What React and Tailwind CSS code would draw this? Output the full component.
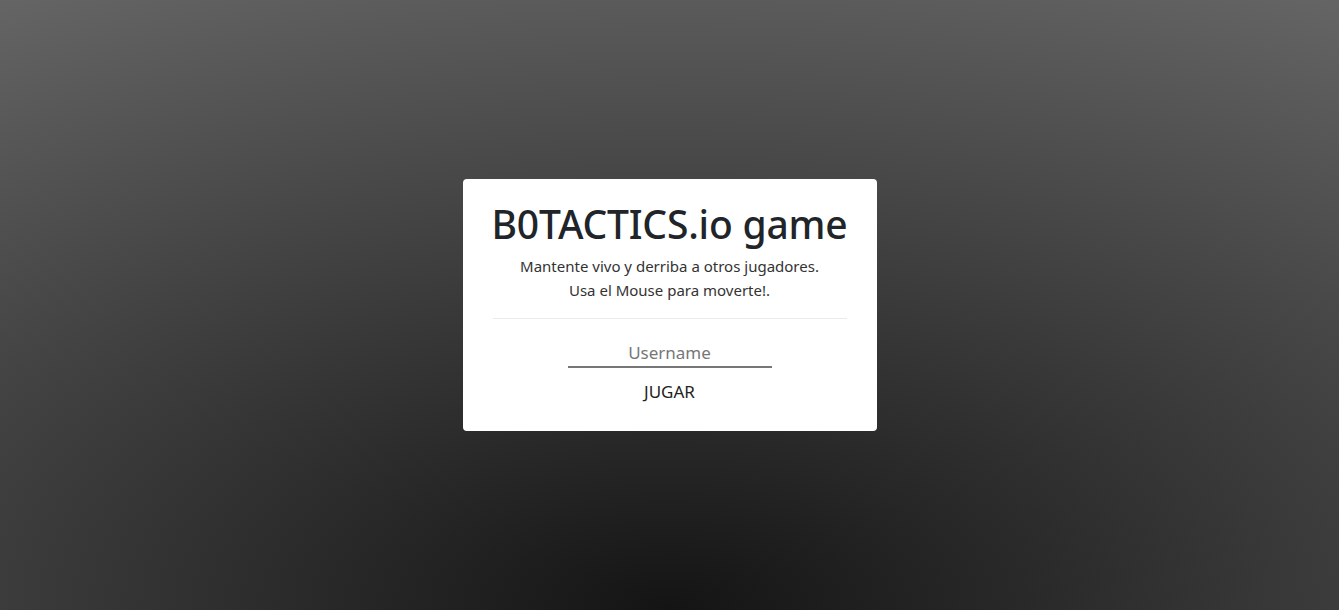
export default function App() {
  return (
    <div className="min-h-screen w-full flex items-center justify-center bg-[radial-gradient(ellipse_1390px_710px_at_50%_100%,#141414,#666666)] font-['Noto_Sans','Open_Sans',sans-serif]">
      <div className="w-[414px] bg-white rounded-[4px] px-[30px] pt-[22px] pb-[26px] text-center text-[#212529]">
        <h1 className="-mx-[20px] whitespace-nowrap text-[39px] leading-[46px] font-medium tracking-[-0.2px]">B0TACTICS.io game</h1>
        <p className="mt-[7px] text-[15px] leading-[24px] text-[#333]">
          Mantente vivo y derriba a otros jugadores.
          <br />
          Usa el Mouse para moverte!.
        </p>
        <hr className="mt-[16px] border-t border-[#eaeaea]" />
        <div className="mt-[19px] flex flex-col items-center">
          <input
            type="text"
            placeholder="Username"
            className="w-[204px] h-[30px] text-center text-[17px] text-[#333] placeholder:text-[#777] border-b-2 border-[#777] outline-none bg-transparent"
          />
          <button className="mt-[11px] text-[17px] leading-[26px] text-[#222] bg-transparent">JUGAR</button>
        </div>
      </div>
    </div>
  );
}
